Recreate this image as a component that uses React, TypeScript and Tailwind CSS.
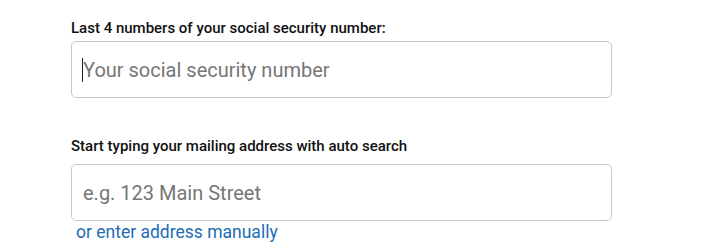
import React from 'react'

export default function App() {
  return (
    <div className="min-h-screen bg-white font-['Roboto',sans-serif]">
      <div className="pl-[71px] pt-[19px] w-[612px]">
        {/* SSN */}
        <label className="block text-[15px] leading-[18px] font-medium text-[#111]">
          Last 4 numbers of your social security number:
        </label>
        <div className="relative mt-[4px]">
          <input
            type="text"
            placeholder="Your social security number"
            className="block w-full h-[57px] px-[11px] rounded-[5px] border border-[#c8c8c8] text-[20px] text-[#333] placeholder:text-[#767676] outline-none"
          />
          <span className="absolute left-[11px] top-[17px] h-[24px] w-px bg-[#222]" />
        </div>

        {/* Address */}
        <label className="block mt-[39px] text-[15px] leading-[18px] font-medium text-[#111]">
          Start typing your mailing address with auto search
        </label>
        <input
          type="text"
          placeholder="e.g. 123 Main Street"
          className="block mt-[9px] w-full h-[57px] px-[11px] rounded-[5px] border border-[#c8c8c8] text-[20px] text-[#333] placeholder:text-[#767676] outline-none"
        />
        <a href="#" className="block pl-[5px] mt-[1px] text-[17.5px] leading-[20px] text-[#1d6cb5]">
          or enter address manually
        </a>
      </div>
    </div>
  )
}
